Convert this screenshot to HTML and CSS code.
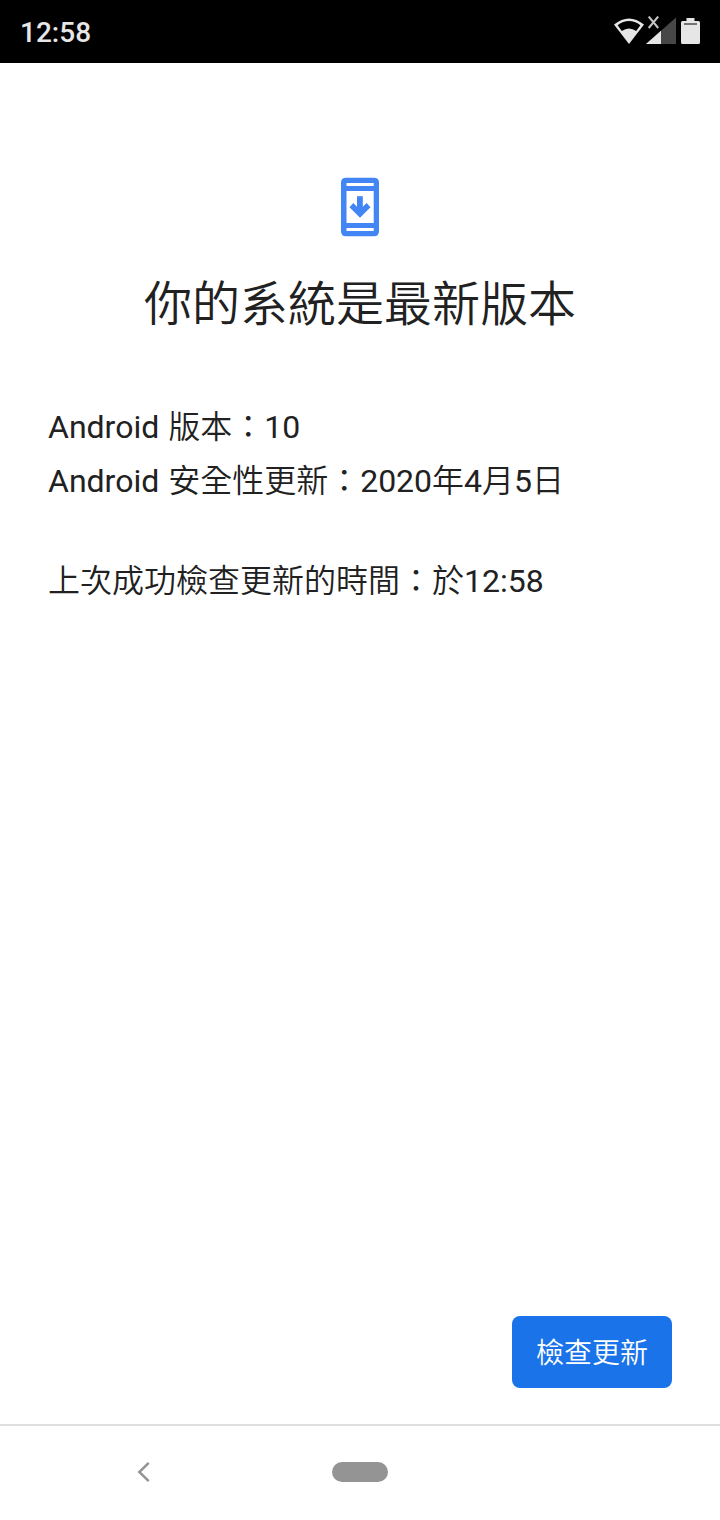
FILE: index.html
```html
<!DOCTYPE html>
<html lang="zh-Hant">
  <head>
    <meta charset="UTF-8" />
    <title>系統更新</title>
    <link rel="stylesheet" href="styles.css">
  </head>
  <body>
    <header class="status-bar">
      <span class="clock">12:58</span>
      <svg class="status-icons" width="88" height="31" viewBox="0 0 88 31">
        <!-- wifi -->
        <path d="M0 8.600Q15-3.600 30 8.600L15 28Z" fill="#e6e6e6"/>
        <path d="M3.600 9.200Q15 1 26.400 9.200L22.200 15Q15 9.800 7.800 15Z" fill="#000"/>
        <!-- mobile signal -->
        <path d="M62 1.500V28H32Z" fill="#474747"/>
        <path d="M47 14.750V28H32Z" fill="#e6e6e6"/>
        <path d="M34.700 .500L44.200 12M44.200 .500L34.700 12" fill="none" stroke="#c4c4c4" stroke-width="2"/>
        <!-- battery -->
        <path d="M72.500 2H80.500V5H84.500Q86 5 86 6.500V26.500Q86 28 84.500 28H68.500Q67 28 67 26.500V6.500Q67 5 68.500 5H72.500Z" fill="#e6e6e6"/>
        <path d="M70 7H83V9H70Z" fill="#737373"/>
      </svg>
    </header>

    <main class="content">
      <svg class="update-icon" width="38" height="60" viewBox="0 0 38 60">
        <path fill="#4285f4" fill-rule="evenodd" d="M5 .700H33Q38 .700 38 5.700V54.300Q38 59.300 33 59.300H5Q0 59.300 0 54.300V5.700Q0 .700 5 .700ZM5.500 6V9H32.700V6ZM5.500 14V46H32.700V14ZM5.500 51V54H32.700V51Z"/>
        <path fill="#4285f4" d="M16 19.200H21.800V29.700L25.600 26L29.500 30.200L19 40.700L8.500 30.200L12.300 26L16 29.700Z"/>
      </svg>
      <h1>你的系統是最新版本</h1>
      <div class="details">
        <p>Android 版本：10</p>
        <p>Android 安全性更新：2020年4月5日</p>
        <p class="last-check">上次成功檢查更新的時間：於12:58</p>
      </div>
      <button class="check-button">檢查更新</button>
    </main>

    <nav class="nav-bar">
      <svg class="back" width="14" height="22" viewBox="0 0 14 22">
        <path d="M12.700 1.800L3.300 11L12.700 20.200" fill="none" stroke="#949494" stroke-width="2.500"/>
      </svg>
      <span class="home"></span>
    </nav>
  </body>
</html>
```
FILE: styles.css
```css
body {
  margin: 0;
  height: 1520px;
  display: flex;
  flex-direction: column;
  background: #fff;
  color: #212121;
  font-family: Roboto, "Noto Sans CJK TC DemiLight", "Noto Sans CJK TC", sans-serif;
}
.status-bar {
  box-sizing: border-box;
  height: 63px;
  padding: 0 18px 0 20px;
  display: flex;
  align-items: center;
  justify-content: space-between;
  background: #000;
}
.clock {
  padding-top: 2px;
  color: #e6e6e6;
  font-size: 28px;
  font-weight: 500;
}
.content {
  flex: 1;
  padding: 114px 48px 36px;
  display: flex;
  flex-direction: column;
}
.update-icon {
  align-self: center;
}
h1 {
  margin: 33px 0 0;
  font-size: 48px;
  line-height: 70px;
  font-weight: 400;
  text-align: center;
}
.details {
  margin-top: 60px;
  font-size: 32px;
  line-height: 54px;
  word-spacing: 1px;
}
.details p {
  margin: 0;
}
.details .last-check {
  margin-top: 46px;
}
.check-button {
  align-self: flex-end;
  margin-top: auto;
  width: 160px;
  height: 72px;
  padding: 0 0 2px;
  border: none;
  border-radius: 8px;
  background: #1a73e8;
  color: #fff;
  font-family: inherit;
  font-size: 28px;
}
.nav-bar {
  box-sizing: border-box;
  height: 96px;
  padding: 0 332px 2px 136px;
  border-top: 2px solid #e0e0e0;
  display: flex;
  align-items: center;
  justify-content: space-between;
}
.home {
  width: 56px;
  height: 20px;
  border-radius: 10px;
  background: #949494;
}
```
